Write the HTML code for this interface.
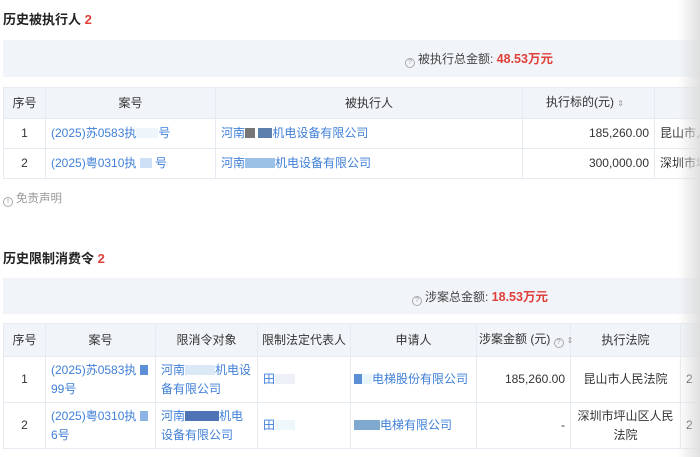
<!DOCTYPE html>
<html><head><meta charset="utf-8"><style>
*{margin:0;padding:0;box-sizing:border-box}
body{width:700px;height:457px;overflow:hidden;background:#fff;font-family:"Liberation Sans","Noto Sans CJK SC",sans-serif;font-size:12px;color:#333;position:relative}
.t{position:absolute;left:3px;font-size:13px;font-weight:bold;color:#222}
.t b{color:#e0403a}
.band{position:absolute;left:3px;right:0;background:#f1f5f9}
.sum{position:absolute;font-size:12px;color:#444;line-height:14px}
.sum b{color:#e0403a;font-size:12.5px}
.q{display:inline-block;width:10px;height:10px;border:1px solid #aaa;border-radius:50%;font-size:7px;line-height:8px;text-align:center;color:#999;vertical-align:-1px;margin-right:3px}
table{position:absolute;left:3px;border-collapse:collapse;table-layout:fixed}
td,th{border:1px solid #e6ebf1;font-weight:normal;padding:0 5px;line-height:19px}
th{background:#f1f5f9;color:#333;white-space:nowrap;padding:0 2px;text-align:center}
td.c{text-align:center}td.r{text-align:right}
td.n{white-space:nowrap;padding:0 3px}
a{color:#3f7fd8;text-decoration:none}
.m{display:inline-block;height:10px;vertical-align:-1px}
.fade{position:absolute;right:0;top:0;width:22px;height:457px;background:linear-gradient(to right,rgba(235,235,235,0),rgba(220,220,220,0.9))}
</style></head><body>
<div class="t" style="top:9px">历史被执行人 <b>2</b></div>
<div class="band" style="top:40px;height:37px"></div>
<div class="sum" style="left:405px;top:52px"><span class="q">?</span>被执行总金额: <b>48.53万元</b></div>
<table style="top:87px;width:720px">
<colgroup><col style="width:42px"><col style="width:170px"><col style="width:307px"><col style="width:132px"><col></colgroup>
<tr style="height:31px"><th>序号</th><th>案号</th><th>被执行人</th><th style="text-align:right;padding-right:30px">执行标的(元) <span style="font-size:8px;color:#999">⇕</span></th><th></th></tr>
<tr style="height:30px"><td class="c">1</td><td><a>(2025)苏0583执<span class="m" style="width:22px;background:#eef5fb"></span>号</a></td><td><a>河南<span class="m" style="width:10px;background:#777"></span> <span class="m" style="width:14px;background:#5d7fae"></span>机电设备有限公司</a></td><td class="r">185,260.00</td><td>昆山市人</td></tr>
<tr style="height:30px"><td class="c">2</td><td><a>(2025)粤0310执 <span class="m" style="width:12px;background:#cde0f6"></span> 号</a></td><td><a>河南<span class="m" style="width:30px;background:#9cc1e6"></span>机电设备有限公司</a></td><td class="r">300,000.00</td><td>深圳市坪</td></tr>
</table>
<div style="position:absolute;left:3px;top:190px;color:#999;font-size:11.5px"><span class="q" style="font-size:7px">i</span>免责声明</div>

<div class="t" style="top:248px">历史限制消费令 <b>2</b></div>
<div class="band" style="top:278px;height:36px"></div>
<div class="sum" style="left:412px;top:290px"><span class="q">?</span>涉案总金额: <b>18.53万元</b></div>
<table style="top:323px;width:720px">
<colgroup><col style="width:42px"><col style="width:110px"><col style="width:102px"><col style="width:93px"><col style="width:126px"><col style="width:94px"><col style="width:110px"><col></colgroup>
<tr style="height:33px"><th>序号</th><th>案号</th><th>限消令对象</th><th>限制法定代表人</th><th>申请人</th><th>涉案金额 (元) <span class="q">?</span><span style="font-size:8px;color:#999">⇕</span></th><th>执行法院</th><th></th></tr>
<tr style="height:46px"><td class="c">1</td><td><a>(2025)苏0583执 <span class="m" style="width:8px;background:#5b8fd6"></span> 99号</a></td><td><a>河南<span class="m" style="width:30px;background:#dbe9f7"></span>机电设备有限公司</a></td><td><a>田<span class="m" style="width:20px;background:#eef0f7"></span></a></td><td class="n"><a><span class="m" style="width:8px;background:#5b8fd6"></span><span class="m" style="width:10px;background:#e8f6fb"></span>电梯股份有限公司</a></td><td class="r">185,260.00</td><td class="c">昆山市人民法院</td><td>2</td></tr>
<tr style="height:46px"><td class="c">2</td><td><a>(2025)粤0310执 <span class="m" style="width:8px;background:#8eb3e4"></span> 6号</a></td><td><a>河南<span class="m" style="width:34px;background:#4f74b6"></span>机电设备有限公司</a></td><td><a>田<span class="m" style="width:20px;background:#eef8fc"></span></a></td><td class="n"><a><span class="m" style="width:26px;background:#7fa9cf"></span>电梯有限公司</a></td><td class="r">-</td><td class="c">深圳市坪山区人民法院</td><td>2</td></tr>
</table>
<div class="fade"></div>
</body></html>
